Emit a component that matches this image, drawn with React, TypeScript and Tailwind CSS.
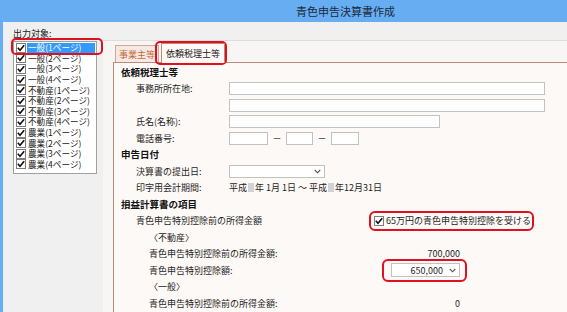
import React from "react";

function Check() {
  return (
    <span className="inline-flex w-[10px] h-[10px] shrink-0 items-center justify-center border border-[#7d7d7d] bg-white">
      <svg width="8" height="8" viewBox="0 0 8 8">
        <path d="M0.8 3.8 L3 6.3 L7.2 1.2" fill="none" stroke="#111" strokeWidth="1.6" />
      </svg>
    </span>
  );
}

function Chevron() {
  return (
    <svg width="7" height="5" viewBox="0 0 7 5">
      <path d="M0.8 1 L3.5 3.8 L6.2 1" fill="none" stroke="#555" strokeWidth="1.1" />
    </svg>
  );
}

const items = [
  "一般(1ページ)",
  "一般(2ページ)",
  "一般(3ページ)",
  "一般(4ページ)",
  "不動産(1ページ)",
  "不動産(2ページ)",
  "不動産(3ページ)",
  "不動産(4ページ)",
  "農業(1ページ)",
  "農業(2ページ)",
  "農業(3ページ)",
  "農業(4ページ)",
];

function Row({ children, className = "" }: { children: React.ReactNode; className?: string }) {
  return <div className={"h-[16.5px] flex items-center " + className}>{children}</div>;
}

function Heading({ children }: { children: React.ReactNode }) {
  return (
    <Row className="pl-[7px]">
      <span className="font-bold text-[9.5px] text-[#111]">{children}</span>
    </Row>
  );
}

function Label({ children }: { children: React.ReactNode }) {
  return <span className="w-[93px] shrink-0">{children}</span>;
}

function Input({ w }: { w: string }) {
  return <span className={"h-[13px] border border-[#c2c2c2] bg-white block shrink-0 " + w} />;
}

function Blank() {
  return <span className="inline-block w-[6px] h-[9px] bg-[#d2d2d2] mx-[1px]" />;
}

export default function App() {
  return (
    <div className="relative w-[567px] h-[312px] overflow-hidden bg-[#f0f0f0] font-['Noto_Sans_CJK_JP','Noto_Sans',sans-serif] text-[9px] leading-none text-[#1a1a1a]">
      <div className="h-[22px] bg-[#67adf1] flex items-center pl-[296px] text-[11px] text-[#1b2a3b]">
        青色申告決算書作成
      </div>
      <div className="flex h-[290px] border-l-[3px] border-[#67adf1]">
        <div className="w-[100px] shrink-0 pl-[10px] pt-[6px]">
          <div className="h-[10px] flex items-center">出力対象:</div>
          <div className="mt-[3px] w-[84px] h-[133px] border border-[#a0a0a0] bg-white pl-[2px] pt-[0.5px]">
            {items.map((t, i) => (
              <div key={t} className="h-[10.6px] flex items-center overflow-hidden">
                <Check />
                <span
                  className={
                    "ml-[1px] pl-[1px] flex-1 h-full flex items-center whitespace-nowrap text-[8.6px] leading-[9px] " +
                    (i === 0 ? "bg-[#3399ff] text-white mr-[1px]" : "")
                  }
                >
                  {t}
                </span>
              </div>
            ))}
          </div>
        </div>
        <div className="flex-1 mt-[18px] border-t border-[#dedede] bg-[#f8f6f5] flex flex-col pl-[10px]">
          <div className="h-[21px] flex items-end pl-[2px] gap-[2px]">
            <div className="h-[17px] px-[3px] flex items-center border border-b-0 border-[#cfa998] bg-[#f6e9e3] text-[#c4693a]">
              事業主等
            </div>
            <div className="relative z-10 h-[20px] mb-[-1px] px-[4px] flex items-center border border-b-0 border-[#b98b78] bg-[#fdf9f7] text-[#222]">
              依頼税理士等
            </div>
          </div>
          <div className="flex-1 border-l border-t border-[#b98b78] bg-[#fdf9f7] pt-[1px] text-[#1e1e1e]">
            <Heading>依頼税理士等</Heading>
            <Row className="pl-[22px]">
              <Label>事務所所在地:</Label>
              <Input w="w-[316px]" />
            </Row>
            <Row className="pl-[115px]">
              <Input w="w-[316px]" />
            </Row>
            <Row className="pl-[22px]">
              <Label>氏名(名称):</Label>
              <Input w="w-[211px]" />
            </Row>
            <Row className="pl-[22px]">
              <Label>電話番号:</Label>
              <Input w="w-[39px]" />
              <span className="w-[18px] text-center">－</span>
              <Input w="w-[27px]" />
              <span className="w-[18px] text-center">－</span>
              <Input w="w-[28px]" />
            </Row>
            <Heading>申告日付</Heading>
            <Row className="pl-[22px]">
              <Label>決算書の提出日:</Label>
              <span className="w-[96px] h-[13px] border border-[#c2c2c2] bg-white flex items-center justify-end pr-[3px]">
                <Chevron />
              </span>
            </Row>
            <Row className="pl-[22px]">
              <Label>印字用会計期間:</Label>
              <span className="flex items-center whitespace-nowrap">
                平成<Blank />年 1月 1日 ～ 平成<Blank />年12月31日
              </span>
            </Row>
            <Heading>損益計算書の項目</Heading>
            <Row className="pl-[22px]">
              <span className="w-[238px] shrink-0">青色申告特別控除前の所得金額</span>
              <Check />
              <span className="ml-[2px]">65万円の青色申告特別控除を受ける</span>
            </Row>
            <Row className="pl-[35px]">〈不動産〉</Row>
            <Row className="pl-[35px]">
              <span className="w-[242px] shrink-0">青色申告特別控除前の所得金額:</span>
              <span className="w-[69px] text-right">700,000</span>
            </Row>
            <Row className="pl-[35px]">
              <span className="w-[242px] shrink-0">青色申告特別控除額:</span>
              <span className="w-[69px] h-[14px] border border-[#c2c2c2] bg-white flex items-center justify-end pr-[3px] gap-[6px]">
                <span>650,000</span>
                <Chevron />
              </span>
            </Row>
            <Row className="pl-[35px]">〈一般〉</Row>
            <Row className="pl-[35px]">
              <span className="w-[242px] shrink-0">青色申告特別控除前の所得金額:</span>
              <span className="w-[69px] text-right">0</span>
            </Row>
          </div>
        </div>
      </div>

      <div className="absolute left-[11px] top-[38px] w-[92px] h-[17px] border-[2.5px] border-[#e0101e] rounded-[5px] pointer-events-none" />
      <div className="absolute left-[155px] top-[41px] w-[72px] h-[24px] border-[2.5px] border-[#e0101e] rounded-[5px] pointer-events-none" />
      <div className="absolute left-[369px] top-[211px] w-[165px] h-[20px] border-[2.5px] border-[#e0101e] rounded-[6px] pointer-events-none" />
      <div className="absolute left-[382px] top-[259px] w-[85px] h-[23px] border-[2.5px] border-[#e0101e] rounded-[6px] pointer-events-none" />
    </div>
  );
}
